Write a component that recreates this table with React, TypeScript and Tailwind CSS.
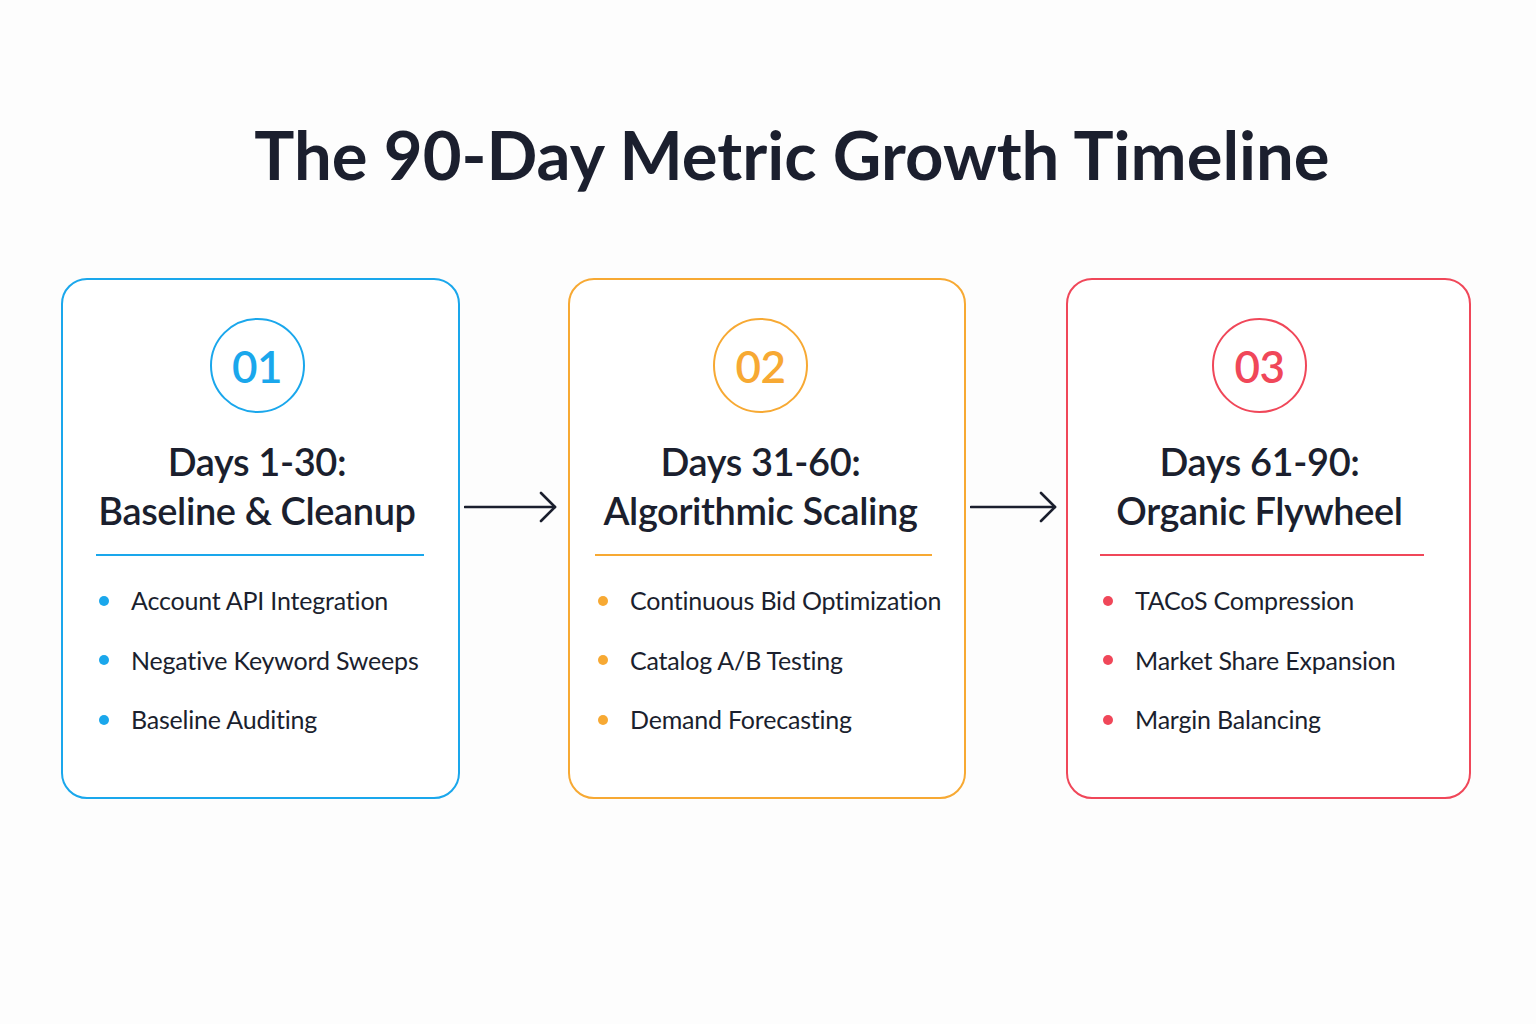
import React from "react";

type Phase = {
  num: string;
  line1: string;
  line2: string;
  items: string[];
  border: string;
  text: string;
  bg: string;
  width: string;
  pad: string;
  shift: string;
};

const phases: Phase[] = [
  {
    num: "01",
    line1: "Days 1-30:",
    line2: "Baseline & Cleanup",
    items: ["Account API Integration", "Negative Keyword Sweeps", "Baseline Auditing"],
    border: "border-[#1aa7ec]",
    text: "text-[#1aa7ec]",
    bg: "bg-[#1aa7ec]",
    width: "w-[399px]",
    pad: "pl-[33px] pr-[34px]",
    shift: "pr-[6px]",
  },
  {
    num: "02",
    line1: "Days 31-60:",
    line2: "Algorithmic Scaling",
    items: ["Continuous Bid Optimization", "Catalog A/B Testing", "Demand Forecasting"],
    border: "border-[#f7a933]",
    text: "text-[#f7a933]",
    bg: "bg-[#f7a933]",
    width: "w-[398px]",
    pad: "pl-[25px] pr-[32px]",
    shift: "pr-[6px]",
  },
  {
    num: "03",
    line1: "Days 61-90:",
    line2: "Organic Flywheel",
    items: ["TACoS Compression", "Market Share Expansion", "Margin Balancing"],
    border: "border-[#f04759]",
    text: "text-[#f04759]",
    bg: "bg-[#f04759]",
    width: "w-[405px]",
    pad: "pl-[32px] pr-[45px]",
    shift: "pr-[5px]",
  },
];

function Card({ p }: { p: Phase }) {
  return (
    <div
      className={`${p.width} h-[521px] shrink-0 rounded-[26px] border-2 ${p.border} bg-white flex flex-col ${p.pad} pt-[38px]`}
    >
      <div className={`flex flex-col items-center ${p.shift}`}>
        <div
          className={`w-[95px] h-[95px] rounded-full border-2 ${p.border} flex items-center justify-center`}
        >
          <span className={`${p.text} text-[44px] font-semibold leading-none tracking-[-0.5px]`}>{p.num}</span>
        </div>
        <div className="mt-[24px] text-center text-[#1b1f2e] text-[38px] font-semibold leading-[49px] tracking-[-0.4px] whitespace-nowrap">
          <div>{p.line1}</div>
          <div>{p.line2}</div>
        </div>
      </div>
      <div className={`mt-[19px] w-full h-[2px] ${p.bg}`} />
      <ul className="mt-[15px] w-full flex flex-col">
        {p.items.map((it) => (
          <li key={it} className="flex items-center h-[59.5px] pl-[3px] whitespace-nowrap">
            <span className={`w-[10px] h-[10px] rounded-full ${p.bg} shrink-0`} />
            <span className="ml-[22px] text-[25px] text-[#1b1f2e] leading-none tracking-[-0.2px]">{it}</span>
          </li>
        ))}
      </ul>
    </div>
  );
}

function Arrow({ w, len }: { w: string; len: number }) {
  return (
    <div className={`${w} shrink-0 flex items-center pl-[4px] pb-[63px]`}>
      <svg width={len + 3} height="34" viewBox={`0 0 ${len + 3} 34`} fill="none">
        <path d={`M1 17H${len}`} stroke="#1b1f2e" strokeWidth="2.6" strokeLinecap="round" />
        <path
          d={`M${len - 14} 3L${len} 17L${len - 14} 31`}
          stroke="#1b1f2e"
          strokeWidth="2.6"
          strokeLinecap="round"
          strokeLinejoin="round"
        />
      </svg>
    </div>
  );
}

export default function App() {
  return (
    <div
      className="w-[1536px] h-[1024px] bg-[#fdfdfd] flex flex-col"
      style={{ fontFamily: "Lato, 'Open Sans', sans-serif" }}
    >
      <h1 className="mt-[112px] pl-[48px] text-center text-[67px] font-bold leading-[84px] text-[#1b1f2e] tracking-[0px]">
        The 90-Day Metric Growth Timeline
      </h1>
      <div className="mt-[82px] pl-[61px] flex items-stretch">
        <Card p={phases[0]} />
        <Arrow w="w-[108px]" len={91} />
        <Card p={phases[1]} />
        <Arrow w="w-[100px]" len={85} />
        <Card p={phases[2]} />
      </div>
    </div>
  );
}
